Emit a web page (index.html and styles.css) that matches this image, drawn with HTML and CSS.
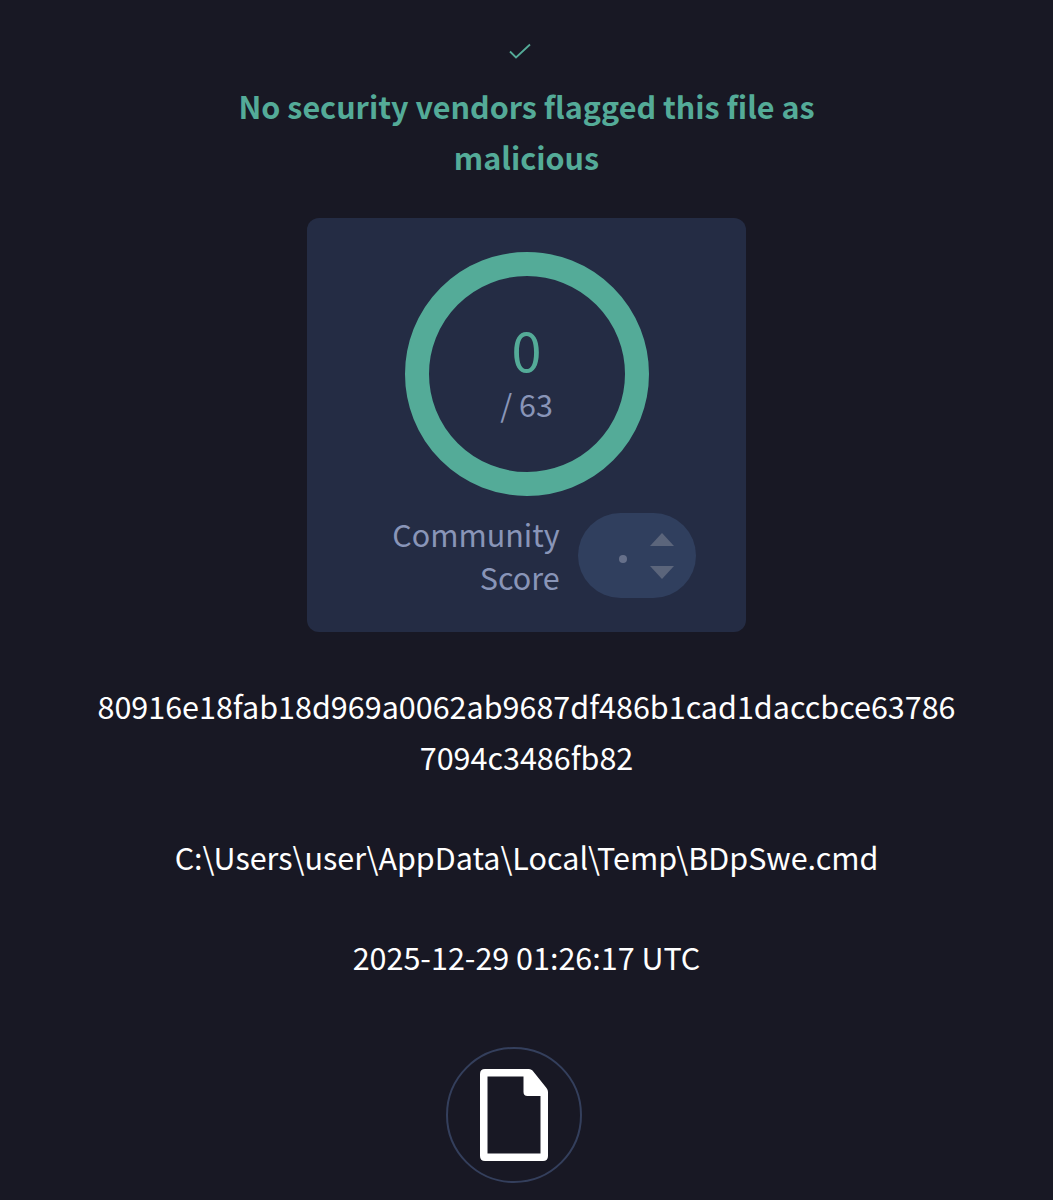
FILE: index.html
```
<!DOCTYPE html>
<html lang="en">
  <head>
    <meta charset="UTF-8">
    <meta name="viewport" content="width=device-width, initial-scale=1.0">
    <title>File report</title>
    <link rel="stylesheet" href="styles.css">
  </head>
  <body>
    <main class="report">
      <!-- Verdict -->
      <svg class="check" viewBox="0 0 24 18" fill="none">
        <path d="M2 9.500l6 6L22 2.500"/>
      </svg>
      <h1 class="verdict">No security vendors flagged this file as malicious</h1>
      <!-- Score card -->
      <section class="card">
        <div class="ring">
          <span class="positives">0</span>
          <span class="total">/ 63</span>
        </div>
        <div class="community">
          <p class="community-label">Community<br>Score</p>
          <div class="pill">
            <span class="dot"></span>
            <svg class="arrows" viewBox="0 0 24 46">
              <path d="M0 13L12 0l12 13z"/>
              <path d="M0 33h24L12 46z"/>
            </svg>
          </div>
        </div>
      </section>
      <!-- File details -->
      <p class="hash">80916e18fab18d969a0062ab9687df486b1cad1daccbce637867094c3486fb82</p>
      <p class="path">C:\Users\user\AppData\Local\Temp\BDpSwe.cmd</p>
      <p class="date">2025-12-29 01:26:17 UTC</p>
      <div class="file-type">
        <svg class="file-icon" viewBox="0 0 68 92">
          <path fill-rule="evenodd" d="M5 0h44q2 0 3.500 1.500L66.500 19q1.500 2 1.500 4v64q0 5-5 5H5q-5 0-5-5V5q0-5 5-5zM7.500 7.500v77H60.500V27H47.500q-4 0-4-4V7.500z"/>
        </svg>
      </div>
    </main>
  </body>
</html>
```

FILE: styles.css
```
* {
  box-sizing: border-box;
}

body {
  margin: 0;
  background: #181824;
  color: #fff;
  font-family: "Noto Sans CJK SC", "Noto Sans", sans-serif;
  font-size: 30.5px;
  line-height: 51.5px;
}

p,
h1 {
  margin: 0;
}

.report {
  display: flex;
  flex-direction: column;
  align-items: center;
  height: 1200px;
  padding-top: 42px;
  text-align: center;
  overflow: hidden;
}

/* Verdict */
.check {
  width: 24px;
  height: 18px;
  margin-right: 13px;
  stroke: #54ab98;
  stroke-width: 1.8;
}

.verdict {
  width: 640px;
  margin-top: 20.5px;
  color: #54ab98;
  font-size: 30.5px;
  font-weight: 700;
}

/* Score card */
.card {
  display: flex;
  flex-direction: column;
  align-items: center;
  width: 439px;
  height: 414px;
  margin-top: 34.5px;
  padding-top: 33.5px;
  border-radius: 12px;
  background: #242c44;
}

.ring {
  display: flex;
  flex-direction: column;
  align-items: center;
  width: 244px;
  height: 244px;
  padding-top: 42px;
  border: 24.5px solid #54ab98;
  border-radius: 50%;
}

.positives {
  color: #54ab98;
  font-size: 54px;
  line-height: 61px;
}

.total {
  color: #8995b8;
}

.community {
  display: flex;
  align-items: center;
  gap: 18px;
  margin-top: 17px;
  margin-left: 35px;
}

.community-label {
  color: #8995b8;
  line-height: 43px;
  text-align: right;
}

.pill {
  display: flex;
  align-items: center;
  justify-content: flex-end;
  gap: 23px;
  width: 118px;
  height: 85px;
  padding-right: 22px;
  border-radius: 43px;
  background: #303f5e;
}

.dot {
  width: 8px;
  height: 8px;
  margin-top: 6px;
  border-radius: 50%;
  background: #66708a;
}

.arrows {
  width: 24px;
  height: 46px;
  fill: #5b657b;
}

/* File details */
.hash {
  width: 870px;
  margin-top: 48.5px;
  word-break: break-all;
}

.path {
  margin-top: 48.5px;
}

.date {
  margin-top: 48.5px;
}

.file-type {
  display: flex;
  flex-shrink: 0;
  align-items: center;
  justify-content: center;
  width: 136px;
  height: 136px;
  margin-top: 63.5px;
  margin-right: 25px;
  border: 2px solid #343f5c;
  border-radius: 50%;
}

.file-icon {
  width: 68px;
  height: 92px;
  fill: #fff;
}
```
